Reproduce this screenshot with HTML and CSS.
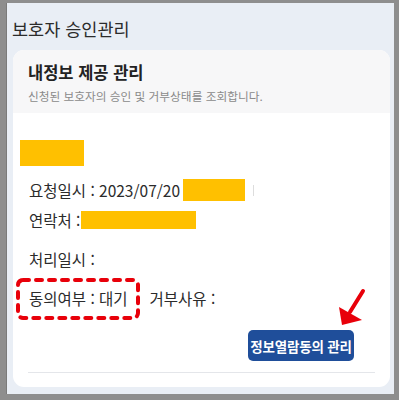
FILE: index.html
```html
<!DOCTYPE html>
<html lang="ko">
<head>
<meta charset="utf-8">
<link rel="stylesheet" href="styles.css">
</head>
<body>
<div class="frame">
  <h1 class="page-title">보호자 승인관리</h1>
  <div class="card">
    <div class="card-head">
      <div class="card-title">내정보 제공 관리</div>
      <div class="card-sub">신청된 보호자의 승인 및 거부상태를 조회합니다.</div>
    </div>
    <div class="card-body">
      <div class="mask name-mask"></div>
      <div class="row row-req">요청일시 : 2023/07/20 <span class="mask time-mask"></span><span class="tick"></span></div>
      <div class="row row-tel">연락처 :<span class="mask tel-mask"></span></div>
      <div class="row row-proc">처리일시 :</div>
      <div class="row row-agree">
        <span class="agree">동의여부 : 대기
          <svg class="dash-box" width="124" height="42" viewBox="0 0 124 42"><rect x="2" y="2" width="120" height="38" rx="5" fill="none" stroke="#e8000a" stroke-width="4" stroke-linecap="round" stroke-dasharray="6 7"/></svg>
        </span>
        <span class="reject">거부사유 :</span>
      </div>
      <div class="btn-row">
        <button class="btn">정보열람동의 관리</button>
      </div>
      <div class="divider"></div>
      <svg class="arrow" width="32" height="42" viewBox="0 0 32 42"><line x1="28" y1="4" x2="15" y2="25" stroke="#e8000a" stroke-width="4" stroke-linecap="round"/><polygon points="7,38 4,20 27,33" fill="#e8000a"/></svg>
    </div>
  </div>
</div>
</body>
</html>
```
FILE: styles.css
```css
* { box-sizing: border-box; }
html, body { margin: 0; padding: 0; }
body {
  font-family: "Noto Sans CJK KR", "Noto Sans", sans-serif;
  width: 399px;
  height: 400px;
  overflow: hidden;
  background: #8e8e8e;
}
.frame {
  width: 399px;
  height: 400px;
  border-top: 3px solid #8e8e8e;
  border-left: 6px solid #8e8e8e;
  border-right: 5px solid #8e8e8e;
  border-bottom: 6px solid #8e8e8e;
  background: #e9eef5;
  display: flex;
  flex-direction: column;
  box-shadow: inset 1px 0 0 #7a7a7a;
}
.page-title {
  margin: 0;
  padding: 14px 0 0 6px;
  height: 47px;
  font-size: 17.5px;
  line-height: 24px;
  font-weight: 400;
  color: #2b2b2b;
}
.card {
  margin: 0 4px 7px 7px;
  flex: 1;
  background: #fff;
  border-radius: 11px;
  overflow: hidden;
  display: flex;
  flex-direction: column;
}
.card-head {
  background: #f7f7f8;
  height: 63px;
  padding: 11px 0 0 15px;
}
.card-title {
  font-size: 16.5px;
  font-weight: 700;
  color: #222;
  line-height: 22px;
}
.card-sub {
  margin-top: 5px;
  font-size: 11.7px;
  color: #8a8a8a;
  line-height: 16px;
}
.card-body {
  padding: 27px 0 0 7px;
  flex: 1;
  display: flex;
  flex-direction: column;
  position: relative;
}
.mask { background: #ffc000; display: inline-block; }
.name-mask { width: 64px; height: 26px; }
.row {
  font-size: 15.5px;
  color: #2b2b2b;
  line-height: 22px;
  padding-left: 9px;
  display: flex;
  align-items: center;
}
.row-req { margin-top: 13px; }
.time-mask { width: 62px; height: 22px; margin-left: 3px; }
.tick { width: 1px; height: 11px; background: #ddd; margin-left: 8px; }
.row-tel { margin-top: 8px; }
.tel-mask { width: 115px; height: 18px; margin-left: 1px; }
.row-proc { margin-top: 17px; }
.row-agree { margin-top: 17px; }
.agree { position: relative; }
.dash-box { position: absolute; left: -13px; top: -9px; }
.reject { margin-left: 22px; }
.btn-row {
  margin-top: 21px;
  display: flex;
  justify-content: flex-end;
  padding-right: 36px;
}
.btn {
  width: 106px;
  height: 31px;
  background: #1f4e9a;
  color: #fff;
  border: none;
  border-radius: 5px;
  font-family: inherit;
  font-size: 13.5px;
  font-weight: 700;
  padding: 0;
  letter-spacing: -0.2px;
}
.arrow { position: absolute; left: 322px; top: 174px; }
.divider {
  margin: 11px 15px 0 8px;
  height: 1px;
  background: #e4e6ea;
}
```
